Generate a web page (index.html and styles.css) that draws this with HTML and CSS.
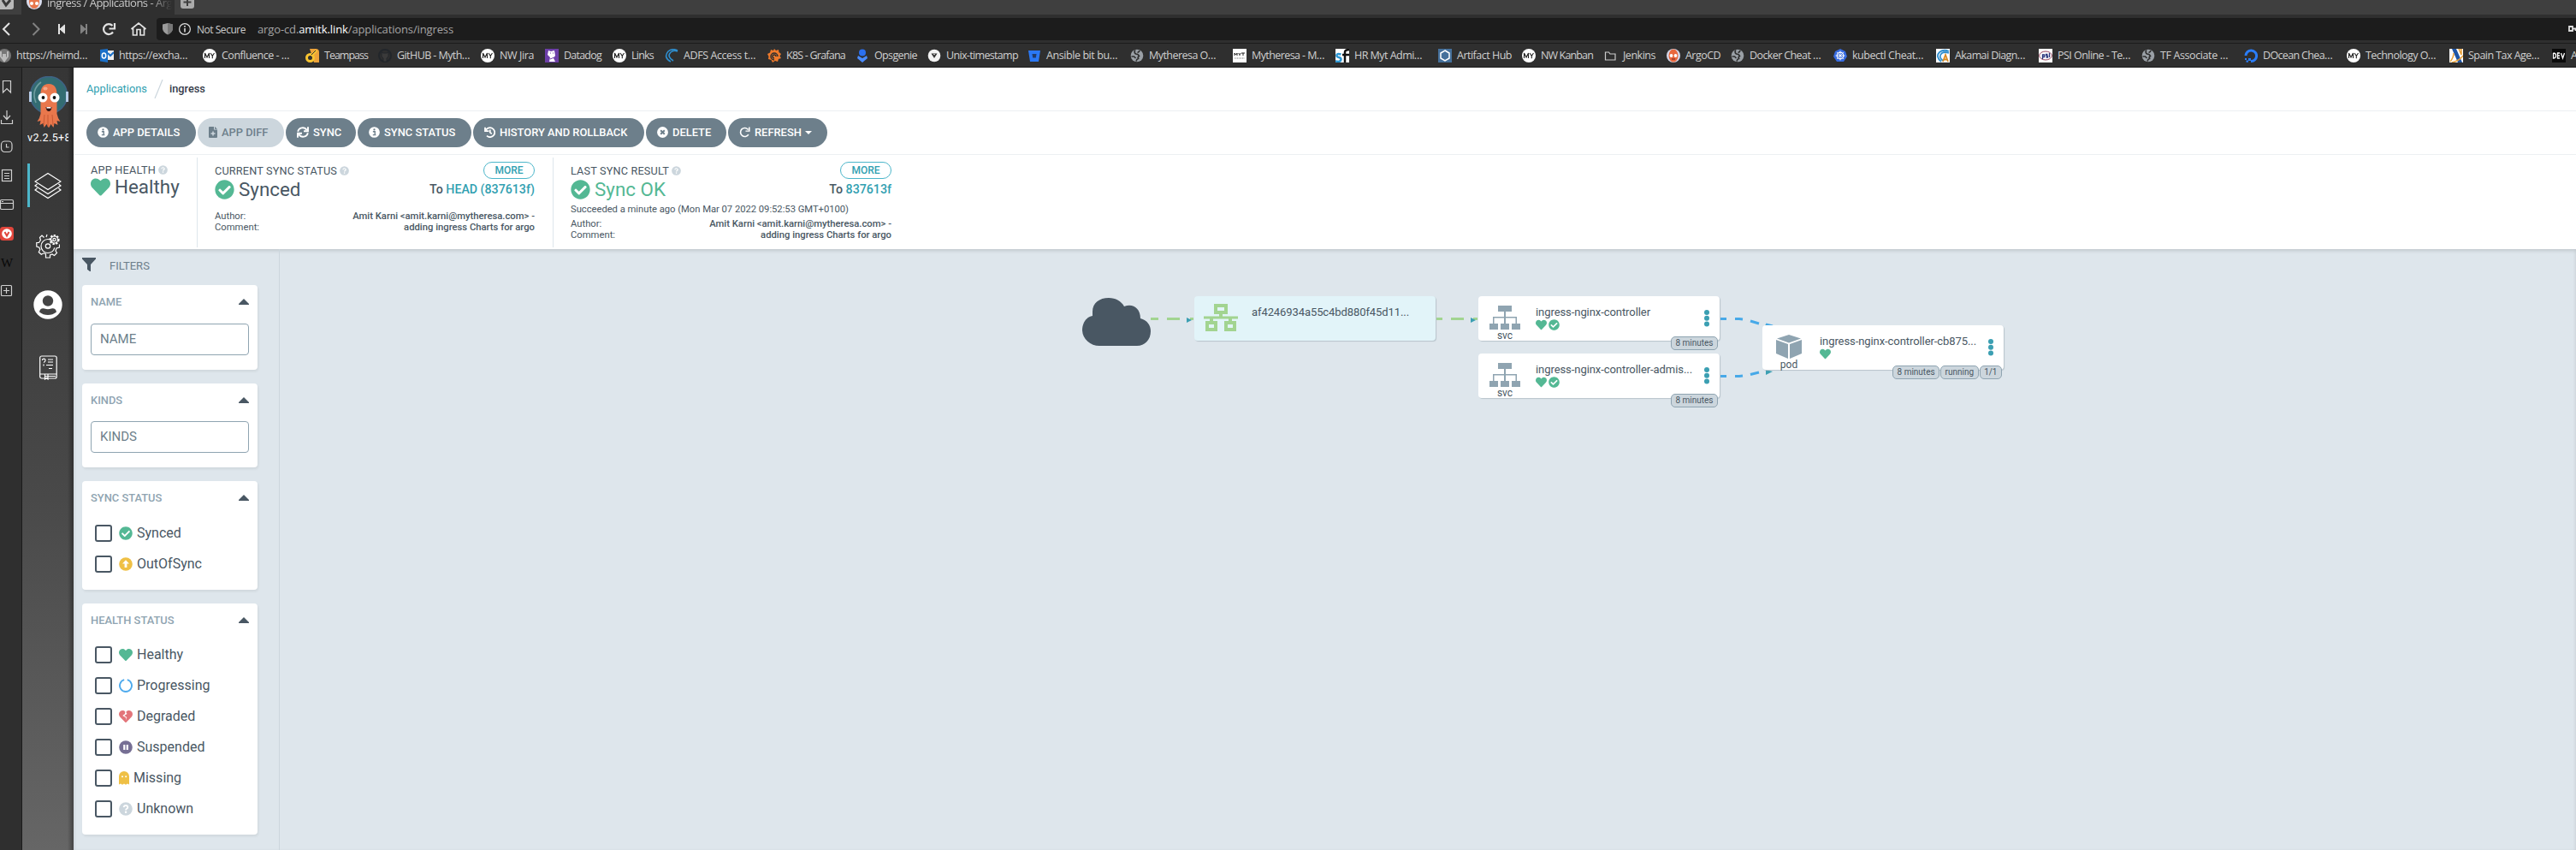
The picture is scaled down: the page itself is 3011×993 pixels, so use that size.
FILE: index.html
```html
<!DOCTYPE html>
<html lang="en">
<head>
<meta charset="utf-8">
<title>ingress / Applications - Argo CD</title>
<link rel="stylesheet" href="styles.css">
</head>
<body>
<svg class="defs" width="0" height="0">
  <symbol id="heart" viewBox="0 0 512 512"><path d="M462.3 62.6C407.5 15.9 326 24.3 275.7 76.2L256 96.5l-19.7-20.3C186.1 24.3 104.5 15.9 49.7 62.6c-62.8 53.6-66.1 149.8-9.9 207.9l193.5 199.8c12.5 12.9 32.8 12.9 45.3 0l193.5-199.8c56.3-58.1 53-154.3-9.8-207.9z"/></symbol>
  <symbol id="check" viewBox="0 0 512 512"><path d="M504 256c0 136.967-111.033 248-248 248S8 392.967 8 256 119.033 8 256 8s248 111.033 248 248zM227.314 387.314l184-184c6.248-6.248 6.248-16.379 0-22.627l-22.627-22.627c-6.248-6.249-16.379-6.249-22.628 0L216 308.118l-70.059-70.059c-6.248-6.248-16.379-6.248-22.628 0l-22.627 22.627c-6.248 6.248-6.248 16.379 0 22.627l104 104c6.249 6.249 16.379 6.249 22.628.001z"/></symbol>
  <symbol id="question" viewBox="0 0 16 16"><circle cx="8" cy="8" r="7.8"/><path d="M5.6 6.2Q6 4 8 4T10.4 6.1Q10.4 7.2 9.2 7.8Q8.1 8.4 8.1 9.4" fill="none" stroke="#fff" stroke-width="1.8"/><circle cx="8.1" cy="11.8" r="1.2" fill="#fff"/></symbol>
  <symbol id="info" viewBox="0 0 16 16"><circle cx="8" cy="8" r="7.8" fill="#fff"/><path d="M6 7h2.9v4.7M5.9 11.9h4.4" fill="none" stroke="#6d7f8b" stroke-width="1.7"/><circle cx="8" cy="4.2" r="1.4" fill="#6d7f8b"/></symbol>
  <symbol id="refresh" viewBox="0 0 16 16"><path d="M13.4 11.2A6.2 6.2 0 1 1 13 4.2" fill="none" stroke="#fff" stroke-width="2"/><path d="M15.5.6v6.6H9.2V5.6h4.4v-5z" fill="#fff"/></symbol>
  <symbol id="caret" viewBox="0 0 12 7"><path d="M6 0l6 6v1H0V6z"/></symbol>
  <symbol id="svc" viewBox="0 0 36 28"><path d="M10 0h16v7h-7v6h13v8h4v7H26v-7h4.500v-6.500H19V21h4v7H13v-7h4v-6.500H5.500V21H10v7H0v-7h4v-8h13V7h-7z"/></symbol>
  <symbol id="argo" viewBox="0 0 46 60"><circle cx="23" cy="22" r="21.500" fill="#336c72" stroke="#3f6386" stroke-width="1.500"/><path d="M8 31Q2 16 14 7" fill="none" stroke="#6f9da0" stroke-width="1.600"/><path d="M0 18h3v12H0zM43 18h3v12h-3z" fill="#b7cce8"/><path d="M23 9c-7 0-9.500 5-9.500 12v23q-1 5-4 9l4-1-1 5 4-2 1 5 3-4 2.500 4.500 2.500-4.500 3 4 1-5 4 2-1-5 4 1q-3-4-4-9V21C32.500 14 30 9 23 9z" fill="#e9774c"/><path d="M18 45l-1 12m5-12v14m5-14l1 12" stroke="#c85a35" stroke-width="1" fill="none"/><circle cx="16" cy="25" r="5.500" fill="#fff"/><circle cx="30" cy="25" r="5.500" fill="#fff"/><circle cx="16.500" cy="25" r="1.900" fill="#111"/><circle cx="29.500" cy="25" r="1.900" fill="#111"/><path d="M19.500 36h7q-.5 5-3.500 5t-3.500-5z" fill="#301515"/><path d="M20.500 36h5v1.600h-5z" fill="#fff"/><ellipse cx="19" cy="14.500" rx="2.600" ry="2" fill="#f4a888"/></symbol>
  <symbol id="globe" viewBox="0 0 16 16"><circle cx="8" cy="8" r="7.300" fill="#9aa0a6"/><path d="M6 1.500Q4 4 6.500 6q3 0 4 2.500-2 1-1 3-2 .5-2.500 3M11 2q-.5 2-2.500 2.500M1.500 9h3l2 2" fill="none" stroke="#303030" stroke-width="1.700"/></symbol>
  <symbol id="my" viewBox="0 0 16 16"><circle cx="8" cy="8" r="8" fill="#fff"/><path d="M2.500 11V5l2.500 5 2.500-5v6M9 5l2.300 3.200L13.500 5M11.300 8v3.200" fill="none" stroke="#222" stroke-width="1.100"/></symbol>
</svg>

<div class="tabs">
  <div class="vbtn"><svg width="16" height="12" viewBox="0 0 16 12"><path d="M-2-4h18V8q0 3-3 3H-2z" fill="#b9b9b9"/><path d="M3 0l4 6 5-6" fill="none" stroke="#3a3a3a" stroke-width="3"/></svg></div>
  <div class="tab"><svg width="18" height="12" viewBox="0 8 18 10"><circle cx="9" cy="9" r="9" fill="#d9dcec"/><ellipse cx="9" cy="9" rx="6" ry="8" fill="#e9774c"/><circle cx="6" cy="11" r="2" fill="#fff"/><circle cx="12" cy="11" r="2" fill="#fff"/></svg><span class="tabname"><span data-fit="146">ingress / Applications - Arg</span></span></div>
  <div class="plus"><svg width="16" height="11"><path d="M0 0h16v7q0 3-3 3H3Q0 10 0 7z" fill="#aaa"/><path d="M8 0v7M3.500 2.500h9" stroke="#3f3f3f" stroke-width="2"/></svg></div>
</div>

<div class="address">
  <svg class="nav" width="183" height="33" fill="none" stroke="#e2e2e2" stroke-width="2">
    <path d="M11 10L4 17l7 7"/><path d="M38.500 10l7 7-7 7" stroke="#828282"/>
    <path d="M69 11v12"/><path d="M75.500 12v10L70 17z" fill="#e2e2e2" stroke-width="1"/>
    <path d="M101 11v12" stroke="#828282"/><path d="M94.500 12v10L100 17z" fill="#828282" stroke="#828282" stroke-width="1"/>
    <path d="M132 20.500A6 6 0 1 1 131.500 13M134 10v6.500h-6.500" stroke-width="2.200"/>
    <path d="M153.500 17l8.500-7 8.500 7M155.500 15v9h4.500v-6.500h4V24h4.500v-9" stroke-width="1.700"/>
  </svg>
  <div class="field">
    <svg width="34" height="16"><path d="M1 2.500l6-1.500 6 1.500V8q-1 4-6 6.500Q2 12 1 8z" fill="#9b9b9b"/><path d="M7 1l6 1.500V8q-1 4-6 6.500z" fill="#777"/><circle cx="27" cy="8" r="6.400" fill="none" stroke="#ddd" stroke-width="1.200"/><path d="M27 7v4.600M27 4v1.700" stroke="#ddd" stroke-width="1.600"/></svg>
    <span class="notsec" data-fit="57">Not Secure</span>
    <span class="url" data-fit="229">argo-cd.<b>amitk.link</b>/applications/ingress</span>
    <svg class="key" width="9" height="8"><path d="M1 1h4v5H1zM5 3.500h4M8.500 3v3" stroke="#ddd" stroke-width="1.800" fill="none"/></svg>
  </div>
</div>
<div class="bookmarks" id="bookmarks"></div>

<div class="main">
  <nav class="panel">
    <svg width="25" height="320" fill="none" stroke="#d0d0d0" stroke-width="1.200">
      <path d="M3.500 15.500h9v13.500l-4.500-4.500L3.500 29z"/>
      <path d="M8 50v10m-4-4l4 4.500 4-4.500M1.500 61v4.500h13V61"/>
      <rect x="1.500" y="86" width="12.500" height="12.500" rx="4"/><path d="M7.500 89v4h3"/>
      <rect x="2.500" y="119.500" width="11" height="13"/><path d="M5 123.500h6M5 126.500h6M5 129.500h6"/>
      <rect x=".5" y="154.500" width="15" height="11" rx="1.500"/><path d="M1 158.500h14M2 156.500h2"/>
      <rect x="0" y="186" width="16" height="16" rx="3.500" fill="#e0463c" stroke="none"/><circle cx="8" cy="194" r="5.800" fill="#fff" stroke="none"/><path d="M5.500 192l2.500 4.500 2.500-4.500" stroke="#e0463c" stroke-width="2"/>
      <rect x="1.500" y="254.500" width="12" height="12" rx="1"/><path d="M4 260.500h7M7.500 257v7"/>
      <text x="1" y="233" fill="#080808" stroke="none" class="wiki">W</text>
    </svg>
  </nav>
  <nav class="rail">
    <svg class="mascot" width="46" height="60"><use href="#argo"/></svg>
    <div class="version">v2.2.5+8</div>
    <div class="railitem active"><svg width="32" height="32" fill="none" stroke="#fff" stroke-width="1.200"><path d="M16 1.500L31 11 16 20.500 1 11zM3.500 14L1 16l15 9.500L31 16l-2.500-2M3.500 19L1 21l15 9.500L31 21l-2.500-2"/></svg></div>
    <div class="railitem gears"><svg width="28" height="29" fill="none" stroke="#fff" stroke-width="1.200"><path d="M12 4l1-3M9.500 4.500L7 2 4.500 4.500l1 3-2 3H.8v4.500l3 1 1 2.500-1.500 3 3 2.800 2.700-1.500 2.500 1V28h5v-3l2.500-1 2.500 1.500 3-3-1.500-2.500 1-3 3.500-1v-3.500"/><circle cx="14" cy="14.500" r="8" stroke-dasharray="42 8" stroke-dashoffset="-2"/><circle cx="14" cy="14.500" r="2.700"/><circle cx="21.500" cy="7" r="5" stroke-dasharray="2.200 1.500" stroke-width="2.200"/><circle cx="21.500" cy="7" r="4"/><circle cx="21.500" cy="7" r="1.600"/></svg></div>
    <div class="railitem user"><svg width="34" height="34"><circle cx="17" cy="17" r="16.700" fill="#fff"/><circle cx="17" cy="12.500" r="6.200" fill="#444"/><path d="M7 25.500q1-5 6-4 4 1.500 8 0 5-1 6 4-4.500 3.500-10 3.500T7 25.500z" fill="#444"/></svg></div>
    <div class="railitem docs"><svg width="21" height="29" fill="none" stroke="#fff" stroke-width="1.200"><rect x=".7" y="1" width="19.500" height="26" rx="2"/><path d="M1 22h19M6 24.500h13M3.500 6q0-1.800 1.800-1.800T7 6t-2 2.500M5 10.500v2M10 5h6M10 8h6M8 11.500h8M11 15.500h4"/><path d="M6.500 22v6l2-1.500L10 28v-6"/></svg></div>
  </nav>

  <div class="app">
    <div class="crumbs"><a>Applications</a><svg width="11" height="22"><path d="M10 0L1 22" stroke="#ccd6dd" stroke-width="1.200"/></svg><b>ingress</b></div>
    <div class="toolbar">
      <div class="btn w1"><svg width="13" height="13"><use href="#info"/></svg>APP DETAILS</div>
      <div class="btn w2 off"><svg width="10" height="13"><path d="M0 1q0-1 1-1h5v3.500h4V12q0 1-1 1H1q-1 0-1-1zM7 0l3 2.800H7z" fill="#6d7f8b"/><path d="M5 5.500v5M2.500 8h5" stroke="#ccd6dd" stroke-width="1.500"/></svg>APP DIFF</div>
      <div class="btn w3"><svg width="14" height="13" fill="none" stroke="#fff" stroke-width="1.900"><path d="M1.200 5.800A5.600 5.600 0 0 1 11.500 4M13 .2v5H8M12.800 7.200A5.600 5.600 0 0 1 2.500 9M1 12.800v-5h5"/></svg>SYNC</div>
      <div class="btn w4"><svg width="13" height="13"><use href="#info"/></svg>SYNC STATUS</div>
      <div class="btn w5"><svg width="13" height="13" fill="none" stroke="#fff" stroke-width="1.800"><path d="M1 .8v4.400h4.400M1.500 5A5.500 5.500 0 1 1 3 10.700M6.800 3.500v3.200l2 1.700"/></svg>HISTORY AND ROLLBACK</div>
      <div class="btn w6"><svg width="13" height="13"><circle cx="6.500" cy="6.500" r="6.400" fill="#fff"/><path d="M4.200 4.200l4.600 4.600m0-4.600L4.200 8.800" stroke="#6d7f8b" stroke-width="2"/></svg>DELETE</div>
      <div class="btn w7"><svg width="13" height="13"><use href="#refresh"/></svg>REFRESH<svg class="down" width="8" height="4"><path d="M0 0h8L4 4z" fill="#fff"/></svg></div>
    </div>
    <div class="status">
      <section class="health">
        <div class="label"><span data-fit="76">APP HEALTH</span><svg class="q" width="11" height="11"><use href="#question"/></svg></div>
        <div class="big"><svg width="23" height="23" fill="#54b894"><use href="#heart"/></svg>Healthy</div>
      </section>
      <section class="sync">
        <div class="row top"><div class="label"><span data-fit="143">CURRENT SYNC STATUS</span><svg class="q" width="11" height="11"><use href="#question"/></svg></div><span class="more">MORE</span></div>
        <div class="row mid"><div class="big"><svg width="23" height="23" fill="#54b894"><use href="#check"/></svg>Synced</div><div class="to">To <a>HEAD (837613f)</a></div></div>
        <div class="row meta first"><span>Author:</span><b>Amit Karni &lt;amit.karni@mytheresa.com&gt; -</b></div>
        <div class="row meta"><span>Comment:</span><b>adding ingress Charts for argo</b></div>
      </section>
      <section class="sync result">
        <div class="row top"><div class="label"><span data-fit="115">LAST SYNC RESULT</span><svg class="q" width="11" height="11"><use href="#question"/></svg></div><span class="more">MORE</span></div>
        <div class="row mid"><div class="big ok"><svg width="23" height="23" fill="#54b894"><use href="#check"/></svg>Sync OK</div><div class="to">To <a>837613f</a></div></div>
        <div class="when"><span data-fit="325">Succeeded a minute ago (Mon Mar 07 2022 09:52:53 GMT+0100)</span></div>
        <div class="row meta"><span>Author:</span><b>Amit Karni &lt;amit.karni@mytheresa.com&gt; -</b></div>
        <div class="row meta"><span>Comment:</span><b>adding ingress Charts for argo</b></div>
      </section>
    </div>

    <div class="body">
      <aside class="filters">
        <div class="fhead"><svg width="16" height="16"><path d="M0 0h16v1.500L10 8v8H9l-3-2.300V8L0 1.500z" fill="#495763"/></svg>FILTERS</div>
        <div class="card c1"><div class="ctitle">NAME<svg width="12" height="7" fill="#495763"><use href="#caret"/></svg></div><div class="input">NAME</div></div>
        <div class="card c2"><div class="ctitle">KINDS<svg width="12" height="7" fill="#495763"><use href="#caret"/></svg></div><div class="input">KINDS</div></div>
        <div class="card c3"><div class="ctitle">SYNC STATUS<svg width="12" height="7" fill="#495763"><use href="#caret"/></svg></div>
          <div class="opt"><i></i><svg width="16" height="16" fill="#54b894"><use href="#check"/></svg>Synced</div>
          <div class="opt"><i></i><svg width="16" height="16"><circle cx="8" cy="8" r="7.800" fill="#efc045"/><path d="M8 3.200l4 4.300H9.400V12H6.600V7.500H4z" fill="#fff"/></svg>OutOfSync</div>
        </div>
        <div class="card c4"><div class="ctitle">HEALTH STATUS<svg width="12" height="7" fill="#495763"><use href="#caret"/></svg></div>
          <div class="opt"><i></i><svg width="16" height="16" fill="#54b894"><use href="#heart"/></svg>Healthy</div>
          <div class="opt"><i></i><svg width="16" height="16" fill="none" stroke="#4eaaed" stroke-width="1.900"><path d="M9.800 1.200A7 7 0 1 1 6.200 1.200"/></svg>Progressing</div>
          <div class="opt"><i></i><svg width="16" height="16" fill="#e3757a"><use href="#heart"/><path d="M7.500 1.500L9.500 5 6.300 7l3 2-1.300 3.500.300-3-4-2.500L7 5z" fill="#fff"/></svg>Degraded</div>
          <div class="opt"><i></i><svg width="16" height="16"><circle cx="8" cy="8" r="7.800" fill="#766f94"/><path d="M5.200 5h2.200v6H5.200zM8.700 5h2.200v6H8.700z" fill="#fff"/></svg>Suspended</div>
          <div class="opt"><i></i><svg width="12" height="16"><path d="M0 15.500V6a6 6 0 0 1 12 0v9.500l-2-1-2 1.300-2-1.300-2 1.300-2-1.300z" fill="#efc045"/><circle cx="4" cy="6.300" r="1" fill="#fff"/><circle cx="8.200" cy="6.300" r="1" fill="#fff"/></svg>Missing</div>
          <div class="opt"><i></i><svg width="16" height="16" fill="#ccd6dd"><use href="#question"/></svg>Unknown</div>
        </div>
      </aside>
      <div class="canvas">
        <svg class="edges" width="2685" height="702" viewBox="326 291 2685 702" fill="none">
          <path d="M1285 404a20 19 0 0 1-20-18c0-9 5-16 12-17v-5c0-10 8-16 19-16 8 0 15 4 18 10 9-4 19 1 19 14 8 2 12 8 12 15 0 10-7 17-16 17z" fill="#495763"/>
          <path d="M1345 372.500h9m10 0h15m12 0h4M1679 372.500h7m10 0h15m11 0h5" stroke="#a2d491" stroke-width="3"/>
          <path d="M1387 371v6l6-3zM1719 371v6l6-3z" fill="#3b9fb2"/>
          <path d="M2011 372.500h7m10 0h5l4 .5M2046 375l10 3M2064 379l8 2M2011 439.500h7m10 0h5l4-.5M2046 437.500l10-2.500" stroke="#47a9e8" stroke-width="3"/>
          <path d="M2063 379l6 2h-4zM2064 432v6l8-4z" fill="#3b9fb2"/>
        </svg>
        <div class="node lb"><svg class="ico" width="40" height="32" fill="none" stroke="#a2d491" stroke-width="4"><rect x="14" y="2" width="12" height="8"/><rect x="4" y="22" width="10" height="8"/><rect x="26" y="22" width="10" height="8"/><path d="M20 12v4M9 17v4M31 17v4"/><path d="M0 16h40" stroke-width="2.800"/></svg><div class="name"><span data-fit="184">af4246934a55c4bd880f45d11...</span></div></div>
        <div class="node s1"><div class="kind"><svg width="36" height="28" fill="#8fa4b1"><use href="#svc"/></svg><span>svc</span></div><div class="name"><span data-fit="134">ingress-nginx-controller</span><div class="icons"><svg width="13" height="13"><use href="#heart"/></svg><svg width="13" height="13"><use href="#check"/></svg></div></div><svg class="dots" width="6" height="20"><circle cx="3" cy="3" r="3"/><circle cx="3" cy="9.800" r="3"/><circle cx="3" cy="16.600" r="3"/></svg><div class="pills"><span>8 minutes</span></div></div>
        <div class="node s2"><div class="kind"><svg width="36" height="28" fill="#8fa4b1"><use href="#svc"/></svg><span>svc</span></div><div class="name"><span data-fit="183">ingress-nginx-controller-admis...</span><div class="icons"><svg width="13" height="13"><use href="#heart"/></svg><svg width="13" height="13"><use href="#check"/></svg></div></div><svg class="dots" width="6" height="20"><circle cx="3" cy="3" r="3"/><circle cx="3" cy="9.800" r="3"/><circle cx="3" cy="16.600" r="3"/></svg><div class="pills"><span>8 minutes</span></div></div>
        <div class="node pod"><div class="kind"><svg width="30" height="28" fill="#8fa4b1"><path d="M15 0l14 4.500L15 9.500 1 4.500zM0 6l14 5v17L0 22zM30 6l-14 5v17l14-6z"/></svg><span>pod</span></div><div class="name"><span data-fit="183">ingress-nginx-controller-cb875...</span><div class="icons"><svg width="13" height="13"><use href="#heart"/></svg></div></div><svg class="dots" width="6" height="20"><circle cx="3" cy="3" r="3"/><circle cx="3" cy="9.800" r="3"/><circle cx="3" cy="16.600" r="3"/></svg><div class="pills"><span>8 minutes</span><span>running</span><span>1/1</span></div></div>
      </div>
    </div>
  </div>
</div>
<script src="bookmarks.js"></script>
</body>
</html>
```
FILE: styles.css
```css
* { box-sizing: border-box; }
body { margin: 0; width: 3011px; height: 993px; overflow: hidden; font-family: Roboto, sans-serif; color: #495763; background: #dee6ec; }
svg { display: block; flex: none; }
b { font-weight: 500; }
.defs { position: absolute; }
.tabs { height: 17px; background: #3f3f3f; display: flex; overflow: hidden; font: 13px/14px "Open Sans", sans-serif; }
.vbtn { width: 25px; }
.tab { width: 179px; background: #2f2f2f; display: flex; padding-left: 6px; gap: 6px; }
.tabname { color: #c9c9c9; height: 16px; width: 146px; line-height: 6px; white-space: nowrap; mask-image: linear-gradient(90deg, #000 82%, transparent); }
.plus { padding-left: 7px; }
.address { height: 34px; background: #2f2f2f; border-bottom: 1px solid #1c1c1c; display: flex; }
.field { flex: 1; height: 26px; margin-top: 4px; background: #1c1c1c; border-radius: 4px 0 0 4px; display: flex; align-items: center; padding-left: 6px; font: 12px "Open Sans", sans-serif; color: #ccc; white-space: nowrap; }
.notsec { margin-left: 7px; width: 57px; }
.url { margin-left: 14px; font-size: 13px; color: #a5a5a5; }
.url b { color: #fff; font-weight: 400; }
.key { margin-left: auto; }
.bookmarks { height: 28px; background: #2f2f2f; border-bottom: 1px solid #1c1c1c; display: flex; overflow: hidden; font: 12.500px "Open Sans", sans-serif; color: #d0d0d0; }
.bm { display: flex; align-items: center; gap: 6px; flex: none; white-space: nowrap; }
.bm:first-child { margin-left: -3px; }
.main { display: flex; height: 914px; }
.panel { width: 26px; background: #2f2f2f; border-right: 1px solid #1b1b1b; }
.wiki { font: 15px "Liberation Serif", serif; }
.rail { width: 60px; padding-top: 10px; background: linear-gradient(90deg, transparent 88%, #0005), linear-gradient(#363636, #393939 18%, #494949 55%, #666); }
.mascot { margin-left: 8px; }
.version { margin: 4px 6px 0; height: 18px; font-size: 12.500px; line-height: 16px; letter-spacing: .4px; color: #fff; overflow: hidden; white-space: nowrap; width: 48px; }
.railitem { display: flex; align-items: center; height: 51px; margin-top: 20px; padding-left: 14px; }
.active { margin-left: 6px; padding-left: 5px; border-left: 3px solid #4cb6ca; }
.gears { padding-left: 16px; }
.user { padding-left: 13px; margin-top: 17px; }
.docs { padding-left: 20px; margin-top: 23px; }
.app { flex: 1; display: flex; flex-direction: column; background: #fff; }
.app a { color: #31a0b1; }
.crumbs { height: 51px; border-bottom: 1px solid #ecf0f2; display: flex; align-items: center; padding: 0 0 1px 15px; font-size: 12.800px; }
.crumbs svg { margin: 0 7px 0 8px; }
.crumbs b { color: #363c4a; }
.toolbar { height: 51px; border-bottom: 1px solid #ecf0f2; display: flex; gap: 2px; padding: 8px 15px; }
.btn { height: 34px; border-radius: 17px; background: #6d7f8b; color: #fff; font-size: 12.900px; font-weight: 500; display: flex; align-items: center; padding: 0 0 1px 13px; gap: 5px; white-space: nowrap; }
.btn.off { background: #ccd6dd; color: #6d7f8b; }
.w1 { width: 128px; } .w2 { width: 101px; } .w3 { width: 82px; } .w4 { width: 133px; } .w5 { width: 200px; } .w6 { width: 94px; } .w7 { width: 116px; }
.down { margin-left: -1px; }
.status { height: 110px; display: flex; padding: 3px 0 2px; }
.health { width: 145px; padding: 5px 0 0 20px; border-right: 1px solid #dee6ec; }
.label { display: flex; align-items: center; gap: 3px; height: 18px; font-size: 12.700px; white-space: nowrap; }
.q { fill: #ccd6dd; }
.big { display: flex; align-items: center; gap: 5px; height: 24px; font-size: 22.400px; }
.health .big { margin-top: -1px; }
.ok { color: #54b894; }
.sync { width: 416px; padding: 5px 21px 0 20px; border-right: 1px solid #dee6ec; }
.sync.result { border: 0; }
.row { display: flex; justify-content: space-between; }
.top { height: 20px; }
.top .label { height: 20px; }
.more { height: 20px; width: 60px; border: 1px solid #4cb6ca; border-radius: 10px; color: #31a0b1; font-size: 12px; font-weight: 500; line-height: 18px; text-align: center; }
.mid { height: 24px; }
.to { font-size: 14.200px; font-weight: 500; line-height: 24px; }
.meta { height: 13px; font-size: 11.250px; line-height: 13px; }
.first { margin-top: 13px; }
.when { font-size: 11.250px; line-height: 13px; margin: 5px 0 4px; white-space: nowrap; }
.body { flex: 1; display: flex; background: #dee6ec; box-shadow: 0 2px 4px #0002 inset; }
.filters { width: 241px; border-right: 1px solid #ccd6dd; padding: 10px 10px 0; }
.fhead { display: flex; gap: 16px; height: 16px; font-size: 13px; line-height: 19px; color: #6d7f8b; }
.card { width: 205px; margin-top: 16px; background: #fff; border-radius: 4px; box-shadow: 1px 2px 3px #0001; padding: 9px 10px 0; }
.c1 { height: 99px; } .c2 { height: 98px; } .c3 { height: 127px; } .c4 { height: 270px; }
.ctitle { display: flex; justify-content: space-between; align-items: center; height: 20px; font-size: 12.900px; font-weight: 500; color: #8fa4b1; }
.input { margin-top: 16px; height: 37px; border: 1px solid #8fa4b1; border-radius: 4px; padding-left: 10px; font-size: 15px; line-height: 34px; color: #6d7f8b; }
.c2 .input { margin-top: 15px; }
.opt { height: 36px; display: flex; align-items: center; padding-left: 5px; font-size: 16px; line-height: 20px; }
.ctitle + .opt { margin-top: 14px; }
.c4 .ctitle + .opt { margin-top: 13px; }
.opt i { width: 20px; height: 20px; border: 2px solid #495763; border-radius: 3px; margin-right: 8px; }
.opt svg { margin-right: 5px; }
.canvas { flex: 1; position: relative; }
.edges { position: absolute; left: -1px; top: 0; }
.node { position: absolute; width: 282px; height: 52px; background: #fff; border-radius: 4px; box-shadow: 1px 1px 1px #b8c4cc; }
.lb { left: 1069px; top: 55px; background: #e2f4f9; }
.s1 { left: 1401px; top: 55px; }
.s2 { left: 1401px; top: 122px; }
.pod { left: 1733px; top: 89px; }
.ico { position: absolute; left: 11px; top: 9px; }
.name { padding: 11px 0 0 67px; font-size: 13px; line-height: 16px; white-space: nowrap; }
.kind { position: absolute; left: 0; top: 11px; width: 62px; display: flex; flex-direction: column; align-items: center; font-size: 12px; line-height: 14px; }
.icons { display: flex; gap: 2px; fill: #54b894; }
.dots { position: absolute; right: 12px; top: 16px; fill: #3b9fb2; }
.pills { position: absolute; right: 2px; top: 47px; display: flex; gap: 1px; font-size: 10px; }
.pills span { height: 16px; border: 1px solid #8fa4b1; border-radius: 5px; background: #ccd6dd; line-height: 14px; padding: 0 4.500px; }
```
FILE: bookmarks.js
```js
const use = id => `<use href="#${id}"/>`;
const sq = c => `<path d="M0 0h16v16H0z" fill="${c}"/>`;
const icons = {
  my: use('my'), globe: use('globe'),
  heim: '<circle cx="8" cy="8" r="8" fill="#777"/><path d="M4 3v6l3 4V6m5-3v6l-3 4V6" stroke="#bbb" stroke-width="2" fill="none"/>',
  outlook: '<path d="M7 2h9v11H7z" fill="#eee"/><path d="M9 5l3 3 4-4" stroke="#1b70c8" stroke-width="2" fill="none"/><path d="M0 1l9-1v16l-9-1.500z" fill="#1b70c8"/><ellipse cx="4.500" cy="8" rx="2.200" ry="3" stroke="#fff" stroke-width="1.500" fill="none"/>',
  team: '<path d="M5 0h7q4 0 4 4v12h-6z" fill="#eda33a"/><circle cx="5.500" cy="10.500" r="4" stroke="#f7c431" stroke-width="3" fill="none"/><path d="M8 7l5-5" stroke="#f7c431" stroke-width="3"/><path d="M7 7l5-5M5 11l2-1" stroke="#333" stroke-width="1"/>',
  git: '<circle cx="8" cy="8" r="7" fill="none" stroke="#22262b" stroke-width="2"/><path d="M4 4l2 1h4l2-1v5l-2 2v4H6v-4L4 9z" fill="#3a3a3a" stroke="#22262b"/>',
  dog: sq('#6d3fa8') + '<path d="M4 2l3 1 4-1 1 6-2 3 2 4-7 0 1-5-3-3z" fill="#fff"/><path d="M6 5h1m2 0h1M6 12l5-2" stroke="#6d3fa8"/>',
  adfs: '<path d="M7 15Q-2 10 4 3 9-1 15 2M10 14Q2 9 7 4q3-3 8-1" fill="none" stroke="#2f8fd0" stroke-width="1.600"/>',
  graf: '<path d="M8 0l2 2 3-1 .5 3L16 6l-1.500 2.500L16 11l-3 1-1 3-3-1-3 2-1.500-3L1 12l.5-3L0 6l3-1.500L4 1l3 1z" fill="#ee7a2c"/><path d="M12 9a4 4 0 1 0-4 4M10 9a2 2 0 1 0-2 2" stroke="#303030" stroke-width="1.500" fill="none"/>',
  ops: '<circle cx="8" cy="4.500" r="4" fill="#2b70f0"/><path d="M3 8l5 3 5-3 1 3-6 5-6-5z" fill="#4a8cff"/>',
  unix: '<circle cx="8" cy="8" r="7.300" fill="#f3f3f3"/><path d="M4.500 5.500h7L8 11z" fill="#333"/><path d="M7 6h2L8 7.500z" fill="#fff"/>',
  bit: '<path d="M1 2h14l-2 13H3z" fill="#2a78f5"/><path d="M5.500 6h5l-.7 4.500H6.200z" fill="#203a68"/>',
  myt: sq('#fff') + '<path d="M2 8V5l1.500 2L5 5v3M6.500 5L8 6.500 9.500 5M8 6v2M10 5h4m-2 0v3" stroke="#222" fill="none"/><path d="M2 11h12" stroke="#888" stroke-dasharray="1 .5"/>',
  sf: sq('#fff') + '<path d="M6.500 6.500Q1 5 1.500 8q0 1.500 2.500 2t2.500 2.500Q6 16 0 14.500" stroke="#2b96d3" stroke-width="2.500" fill="none"/><path d="M11 16V4q0-3 5-3M8 7h8" stroke="#111" stroke-width="2.500" fill="none"/>',
  hub: sq('#45709b') + '<path d="M8 2l5 3v6l-5 3-5-3V5z" fill="none" stroke="#fff" stroke-width="1.500"/>',
  folder: '<path d="M1.500 4h4l1.500 2h6v7H1.500z" fill="none" stroke="#ccc" stroke-width="1.200"/>',
  argo: '<circle cx="8" cy="8" r="8" fill="#d4d6e8"/><ellipse cx="8" cy="8" rx="5.500" ry="7.500" fill="#e9683d"/><circle cx="5.500" cy="8" r="1.900" fill="#fff"/><circle cx="10.500" cy="8" r="1.900" fill="#fff"/><path d="M6 12h4" stroke="#722"/>',
  kube: '<path d="M8 0l6 3 2 6-4 6H4L0 9l2-6z" fill="#376be0"/><circle cx="8" cy="8" r="3.800" fill="none" stroke="#fff" stroke-width="1.200"/><path d="M8 2.500v11M2.500 8h11M4 4l8 8m0-8l-8 8" stroke="#fff" stroke-width=".8"/>',
  aka: sq('#fff') + '<path d="M6 15Q-1 9 4 4 9 0 15 3M8 14Q2 9 7 5q3-2 8 0" fill="none" stroke="#2f8fd0" stroke-width="1.800"/><path d="M8 15l3-8 3 8M9 12.500h4" fill="none" stroke="#d98b24" stroke-width="1.800"/>',
  psi: sq('#fff') + '<ellipse cx="8" cy="8" rx="7.300" ry="5" fill="none" stroke="#94455e"/><path d="M4.500 12V7h2v2.500h-2M10.500 6.500h-2v1.700h2V10h-2M12.500 5v5" fill="none" stroke="#28357c" stroke-width="1.300"/>',
  ocean: '<path d="M8 14.500A6.300 6.300 0 1 0 2 8" fill="none" stroke="#2b7df7" stroke-width="3"/><path d="M5 11h3v3H5zM2.500 13.500H5v2.200H2.500zM1 11h2v2H1z" fill="#2b7df7"/>',
  tax: sq('#fff') + '<path d="M3 0h5l7 16h-5z" fill="#1f55a5"/><path d="M11 0h3v7zM1 15Q5 10 5 5M3 16q9-2 13-8" fill="none" stroke="#e9a13a" stroke-width="1.500"/>',
  dev: sq('#0a0a0a') + '<path d="M1.500 5v6q3 0 3-3t-3-3M9 5H6.500v6H9M6.500 8H9M10.500 5l2 6 2-6" fill="none" stroke="#fff" stroke-width="1.300"/>'
};
// icon, label, start of the item, width of the label
const list = [
  ['heim', 'https://heimd…', -3, 83], ['outlook', 'https://excha…', 117, 80], ['my', 'Confluence - …', 237, 79],
  ['team', 'Teampass', 357, 51], ['git', 'GitHUB - Myth…', 442, 85], ['my', 'NW Jira', 562, 40],
  ['dog', 'Datadog', 637, 44], ['my', 'Links', 716, 26], ['adfs', 'ADFS Access t…', 777, 84],
  ['graf', 'K8S - Grafana', 897, 69], ['ops', 'Opsgenie', 1000, 50], ['unix', 'Unix-timestamp', 1084, 84],
  ['bit', 'Ansible bit bu…', 1201, 83], ['globe', 'Mytheresa O…', 1321, 78], ['myt', 'Mytheresa - M…', 1441, 85],
  ['sf', 'HR Myt Admi…', 1561, 79], ['hub', 'Artifact Hub', 1681, 64], ['my', 'NW Kanban', 1779, 61],
  ['folder', 'Jenkins', 1875, 38], ['argo', 'ArgoCD', 1948, 41], ['globe', 'Docker Cheat …', 2023, 83],
  ['kube', 'kubectl Cheat…', 2143, 83], ['aka', 'Akamai Diagn…', 2263, 82], ['psi', 'PSI Online - Te…', 2383, 85],
  ['globe', 'TF Associate …', 2503, 79], ['ocean', 'DOcean Chea…', 2623, 81], ['my', 'Technology O…', 2743, 82],
  ['tax', 'Spain Tax Age…', 2863, 83], ['dev', 'A', 2983, 6]
];
const bar = document.getElementById('bookmarks');
bar.innerHTML = list.map(([icon, text, x, w], i) => {
  const next = i + 1 < list.length ? list[i + 1][2] : 3031;
  return `<div class="bm" style="width:${next - x}px"><svg width="16" height="16">${icons[icon]}</svg><span data-fit="${w}">${text}</span></div>`;
}).join('');
// tighten or loosen each label to its given width
document.querySelectorAll('[data-fit]').forEach(el => {
  const r = document.createRange();
  r.selectNodeContents(el);
  const gap = (el.dataset.fit - r.getBoundingClientRect().width) / el.textContent.length;
  el.style.letterSpacing = gap + 'px';
});
```
